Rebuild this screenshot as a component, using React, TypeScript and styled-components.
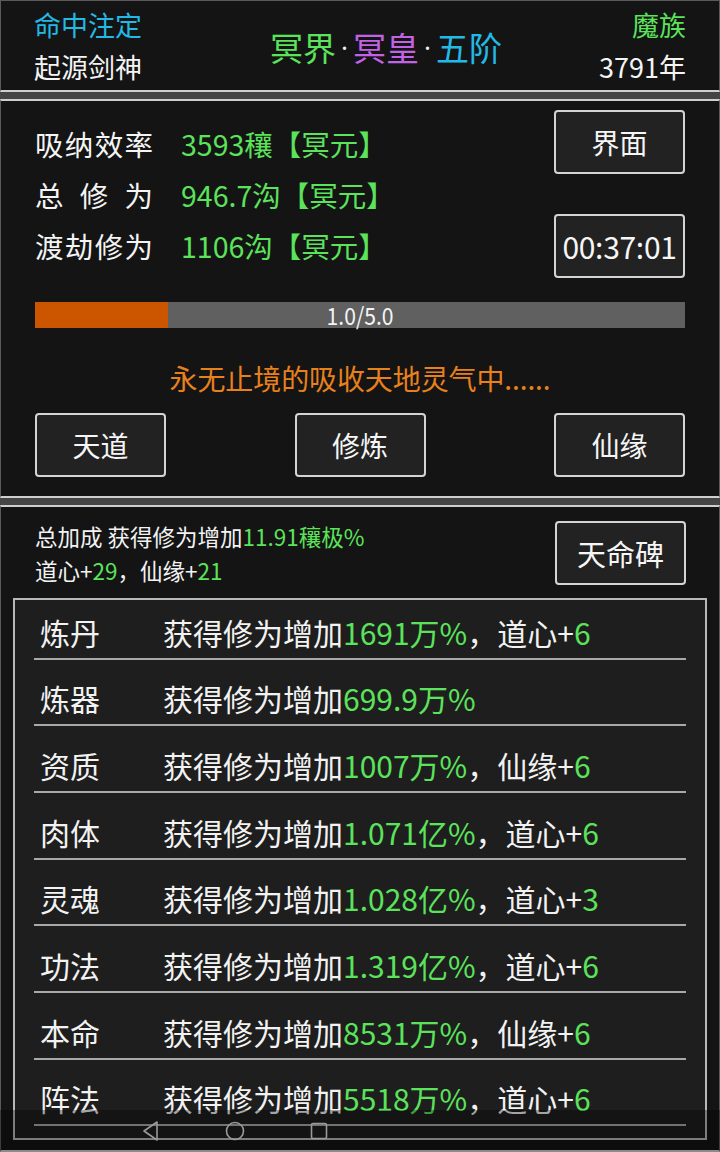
import React from "react";
import styled, { createGlobalStyle } from "styled-components";

const GlobalStyle = createGlobalStyle`
  html, body { margin: 0; padding: 0; background: #454545; }
  body { font-family: "Noto Sans CJK SC", "Noto Sans", sans-serif; color: #f2f2f2; }
  * { box-sizing: border-box; }
`;

const GREEN = "#5be35b";
const CYAN = "#22b9e6";
const PURPLE = "#c262e6";
const ORANGE = "#e8811c";

const Page = styled.div`
  width: 720px;
  height: 1152px;
  overflow: hidden;
  display: flex;
  flex-direction: column;
  gap: 7px;
  background: #454545;
  position: relative;
`;

const Section = styled.section<{ $h?: number }>`
  background: #141414;
  border-top: 2px solid #cfcfcf;
  border-bottom: 2px solid #cfcfcf;
  border-left: 1px solid #5a5a5a;
  border-right: 1px solid #5a5a5a;
  ${(p) => (p.$h ? `height: ${p.$h}px;` : "flex: 1;")}
  flex-shrink: 0;
`;

const HeaderSection = styled(Section)`
  border-top: 1px solid #5a5a5a;
  display: flex;
  align-items: center;
  justify-content: space-between;
  padding: 0 33px 0 33px;
`;

const SideCol = styled.div<{ $right?: boolean }>`
  display: flex;
  flex-direction: column;
  align-items: ${(p) => (p.$right ? "flex-end" : "flex-start")};
  font-size: 27px;
  line-height: 42px;
  width: 140px;
  margin-top: 1px;
`;

const Colored = styled.span<{ $c: string }>`
  color: ${(p) => p.$c};
`;

const Title = styled.div`
  font-size: 33px;
  line-height: 44px;
  display: flex;
  align-items: center;
  margin-left: 52px;
  margin-top: 2px;
`;

const Dot = styled.span`
  color: #f0f0f0;
  font-family: "Noto Sans", sans-serif;
  font-size: 26px;
  margin: 0 5px;
`;

const MainSection = styled(Section)`
  padding: 9px 34px 0 34px;
  display: flex;
  flex-direction: column;
`;

const TopArea = styled.div`
  display: flex;
  justify-content: space-between;
`;

const Stats = styled.div`
  display: flex;
  flex-direction: column;
  padding-top: 8px;
`;

const StatRow = styled.div`
  display: flex;
  align-items: center;
  height: 51px;
  font-size: 28.5px;
`;

const StatLabel = styled.div`
  width: 118px;
  display: flex;
  justify-content: space-between;
  margin-right: 28px;
  color: #f4f4f4;
`;

const StatValue = styled.div`
  color: ${GREEN};
`;

const Buttons = styled.div`
  display: flex;
  flex-direction: column;
  gap: 40px;
`;

const Btn = styled.div<{ $size?: number }>`
  width: 131px;
  height: 64px;
  border: 2px solid #d4d4d4;
  border-radius: 4px;
  background: #222;
  color: #f6f6f6;
  display: flex;
  align-items: center;
  justify-content: center;
  font-size: ${(p) => p.$size ?? 28}px;
`;

const TimerBtn = styled(Btn)`
  letter-spacing: -0.3px;
`;

const Bar = styled.div`
  margin-top: 24px;
  height: 26px;
  background: #606060;
  position: relative;
  display: flex;
  align-items: center;
  justify-content: center;
`;

const BarFill = styled.div`
  position: absolute;
  left: 0;
  top: 0;
  bottom: 0;
  background: #cc5500;
`;

const BarText = styled.span`
  position: relative;
  font-size: 24px;
  line-height: 26px;
  color: #f4f4f4;
  transform: scaleX(0.88);
`;

const Status = styled.div`
  margin-top: 32px;
  text-align: center;
  color: ${ORANGE};
  font-size: 28px;
  line-height: 36px;
  letter-spacing: -0.1px;
`;

const ActionRow = styled.div`
  margin-top: 17px;
  display: flex;
  justify-content: space-between;
`;

const BonusSection = styled(Section)`
  padding: 14px 12px 10px 12px;
  display: flex;
  flex-direction: column;
`;

const BonusTop = styled.div`
  display: flex;
  justify-content: space-between;
  padding: 0 21px 0 22px;
`;

const BonusText = styled.div`
  font-size: 22.5px;
  line-height: 34px;
  color: #f2f2f2;
  margin-top: -2px;
`;

const Panel = styled.div`
  margin-top: 11px;
  border: 2px solid #b8b8b8;
  background: #1e1e1e;
  padding: 0 19px;
  flex: 1;
`;

const Row = styled.div`
  height: 66.7px;
  padding-top: 13px;
  display: flex;
  align-items: center;
  border-bottom: 2px solid #a9a9a9;
  font-size: 30px;
  &:first-child {
    height: 59.5px;
    padding-top: 6px;
  }
`;

const RowLabel = styled.div`
  width: 129px;
  padding-left: 6px;
  color: #f2f2f2;
`;

const RowDesc = styled.div`
  color: #f2f2f2;
`;

const NavBar = styled.div`
  position: absolute;
  left: 0;
  right: 0;
  bottom: 0;
  height: 42px;
  background: rgba(0, 0, 0, 0.32);
  display: flex;
  align-items: center;
  padding-left: 141px;
  gap: 64px;
`;

const NavIcon = styled.svg`
  width: 20px;
  height: 22px;
  stroke: #9a9a9a;
  fill: none;
  stroke-width: 1.6;
`;

const rows: { label: string; value: string; extra?: [string, string] }[] = [
  { label: "炼丹", value: "1691万%", extra: ["道心", "6"] },
  { label: "炼器", value: "699.9万%" },
  { label: "资质", value: "1007万%", extra: ["仙缘", "6"] },
  { label: "肉体", value: "1.071亿%", extra: ["道心", "6"] },
  { label: "灵魂", value: "1.028亿%", extra: ["道心", "3"] },
  { label: "功法", value: "1.319亿%", extra: ["道心", "6"] },
  { label: "本命", value: "8531万%", extra: ["仙缘", "6"] },
  { label: "阵法", value: "5518万%", extra: ["道心", "6"] },
];

const Spread: React.FC<{ text: string }> = ({ text }) => (
  <StatLabel>
    {text.split("").map((c, i) => (
      <span key={i}>{c}</span>
    ))}
  </StatLabel>
);

export default function App() {
  return (
    <>
      <GlobalStyle />
      <Page>
        <HeaderSection $h={92}>
          <SideCol>
            <Colored $c={CYAN}>命中注定</Colored>
            <Colored $c="#f4f4f4">起源剑神</Colored>
          </SideCol>
          <Title>
            <Colored $c={GREEN}>冥界</Colored>
            <Dot>·</Dot>
            <Colored $c={PURPLE}>冥皇</Colored>
            <Dot>·</Dot>
            <Colored $c={CYAN}>五阶</Colored>
          </Title>
          <SideCol $right>
            <Colored $c={GREEN}>魔族</Colored>
            <Colored $c="#f4f4f4">3791年</Colored>
          </SideCol>
        </HeaderSection>

        <MainSection $h={399}>
          <TopArea>
            <Stats>
              <StatRow>
                <Spread text="吸纳效率" />
                <StatValue>3593穰【冥元】</StatValue>
              </StatRow>
              <StatRow>
                <Spread text="总修为" />
                <StatValue>946.7沟【冥元】</StatValue>
              </StatRow>
              <StatRow>
                <Spread text="渡劫修为" />
                <StatValue>1106沟【冥元】</StatValue>
              </StatRow>
            </Stats>
            <Buttons>
              <Btn>界面</Btn>
              <TimerBtn $size={30}>00:37:01</TimerBtn>
            </Buttons>
          </TopArea>
          <Bar>
            <BarFill style={{ width: `${(1.0 / 5.0) * 100 + 0.5}%` }} />
            <BarText>1.0/5.0</BarText>
          </Bar>
          <Status>永无止境的吸收天地灵气中......</Status>
          <ActionRow>
            <Btn>天道</Btn>
            <Btn>修炼</Btn>
            <Btn>仙缘</Btn>
          </ActionRow>
        </MainSection>

        <BonusSection>
          <BonusTop>
            <BonusText>
              <div>
                总加成 获得修为增加<Colored $c={GREEN}>11.91穰极%</Colored>
              </div>
              <div>
                道心+<Colored $c={GREEN}>29</Colored>，仙缘+<Colored $c={GREEN}>21</Colored>
              </div>
            </BonusText>
            <Btn $size={29}>天命碑</Btn>
          </BonusTop>
          <Panel>
            {rows.map((r) => (
              <Row key={r.label}>
                <RowLabel>{r.label}</RowLabel>
                <RowDesc>
                  获得修为增加<Colored $c={GREEN}>{r.value}</Colored>
                  {r.extra && (
                    <>
                      ，{r.extra[0]}+<Colored $c={GREEN}>{r.extra[1]}</Colored>
                    </>
                  )}
                </RowDesc>
              </Row>
            ))}
          </Panel>
        </BonusSection>

        <NavBar>
          <NavIcon viewBox="0 0 20 22">
            <path d="M16 2 L3 11 L16 20 Z" strokeLinejoin="round" />
          </NavIcon>
          <NavIcon viewBox="0 0 20 22">
            <circle cx="10" cy="11" r="8.5" />
          </NavIcon>
          <NavIcon viewBox="0 0 20 22">
            <rect x="2.5" y="3.5" width="15" height="15" rx="1.5" />
          </NavIcon>
        </NavBar>
      </Page>
    </>
  );
}
